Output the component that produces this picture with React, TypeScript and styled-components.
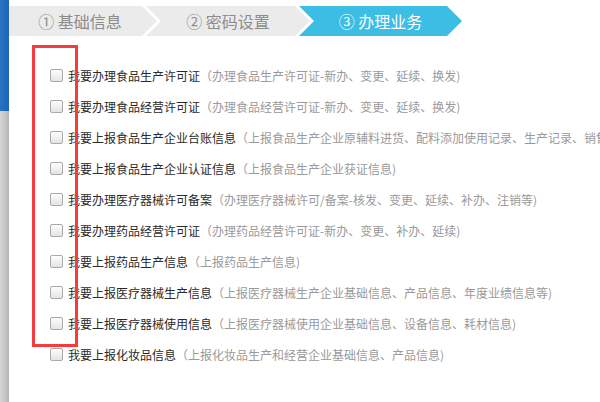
import * as React from 'react';
import styled, { createGlobalStyle } from 'styled-components';

const GlobalStyle = createGlobalStyle`
  html, body {
    margin: 0;
    padding: 0;
    background: #fff;
  }
  body {
    font-family: "Microsoft YaHei", "Noto Sans CJK SC", "Noto Sans", sans-serif;
  }
`;

const Page = styled.div`
  display: flex;
  width: 600px;
  height: 402px;
  overflow: hidden;
  position: relative;
`;

const SideEdge = styled.div`
  width: 9px;
  flex: 0 0 9px;
  display: flex;
  flex-direction: column;
`;

const SideThumb = styled.div`
  height: 111px;
  background: linear-gradient(to right, #2a74c4, #1f63b2);
`;

const SideTrack = styled.div`
  flex: 1;
  background: linear-gradient(to right, #d4d4d4, #c4c4c4 60%, #b4b4b4);
`;

const Main = styled.div`
  flex: 1;
  display: flex;
  flex-direction: column;
  min-width: 0;
`;

const StepBar = styled.div`
  display: flex;
  margin-top: 6px;
  height: 30px;
`;

const Step = styled.div<{ $active?: boolean; $first?: boolean; $w: number }>`
  width: ${p => p.$w}px;
  flex: 0 0 ${p => p.$w}px;
  height: 30px;
  margin-left: ${p => (p.$first ? 0 : -11)}px;
  display: flex;
  align-items: center;
  justify-content: center;
  padding-left: ${p => (p.$first ? 0 : 12)}px;
  padding-right: ${p => (p.$first ? 6 : 12)}px;
  box-sizing: border-box;
  font-size: 16px;
  color: ${p => (p.$active ? '#fff' : '#8c8c8c')};
  background: ${p => (p.$active ? '#3bbde4' : '#ebebeb')};
  clip-path: ${p =>
    p.$first
      ? 'polygon(0 0, calc(100% - 15px) 0, 100% 50%, calc(100% - 15px) 100%, 0 100%)'
      : 'polygon(0 0, calc(100% - 15px) 0, 100% 50%, calc(100% - 15px) 100%, 0 100%, 15px 50%)'};
  white-space: nowrap;
`;

const List = styled.div`
  position: relative;
  margin-top: 24px;
  padding-left: 41px;
  display: flex;
  flex-direction: column;
`;

const Row = styled.label`
  display: flex;
  align-items: center;
  height: 31px;
  white-space: nowrap;
  font-size: 12px;
`;

const Check = styled.span`
  width: 13px;
  height: 13px;
  flex: 0 0 13px;
  box-sizing: border-box;
  border: 1px solid #a9a9a9;
  border-radius: 2px;
  background: linear-gradient(to bottom, #fdfdfd, #e4e4e4);
  margin-right: 5px;
`;

const Title = styled.span`
  color: #2a2a2a;
`;

const Note = styled.span`
  color: #9a9a9a;
`;

const Highlight = styled.div`
  position: absolute;
  left: 23px;
  top: -15px;
  width: 46px;
  height: 302px;
  box-sizing: border-box;
  border: 3px solid #f73b3b;
  pointer-events: none;
`;

const steps = [
  { label: '① 基础信息', w: 148 },
  { label: '② 密码设置', w: 164 },
  { label: '③ 办理业务', w: 163, active: true },
];

const items = [
  ['我要办理食品生产许可证', '（办理食品生产许可证-新办、变更、延续、换发)'],
  ['我要办理食品经营许可证', '（办理食品经营许可证-新办、变更、延续、换发)'],
  ['我要上报食品生产企业台账信息', '（上报食品生产企业原辅料进货、配料添加使用记录、生产记录、销售记录)'],
  ['我要上报食品生产企业认证信息', '（上报食品生产企业获证信息)'],
  ['我要办理医疗器械许可备案', '（办理医疗器械许可/备案-核发、变更、延续、补办、注销等)'],
  ['我要办理药品经营许可证', '（办理药品经营许可证-新办、变更、补办、延续)'],
  ['我要上报药品生产信息', '（上报药品生产信息)'],
  ['我要上报医疗器械生产信息', '（上报医疗器械生产企业基础信息、产品信息、年度业绩信息等)'],
  ['我要上报医疗器械使用信息', '（上报医疗器械使用企业基础信息、设备信息、耗材信息)'],
  ['我要上报化妆品信息', '（上报化妆品生产和经营企业基础信息、产品信息)'],
];

export default function App() {
  return (
    <Page>
      <GlobalStyle />
      <SideEdge>
        <SideThumb />
        <SideTrack />
      </SideEdge>
      <Main>
        <StepBar>
          {steps.map((s, i) => (
            <Step key={s.label} $w={s.w} $first={i === 0} $active={s.active}>
              {s.label}
            </Step>
          ))}
        </StepBar>
        <List>
          {items.map(([title, note]) => (
            <Row key={title}>
              <Check />
              <Title>{title}</Title>
              <Note>{note}</Note>
            </Row>
          ))}
          <Highlight />
        </List>
      </Main>
    </Page>
  );
}
